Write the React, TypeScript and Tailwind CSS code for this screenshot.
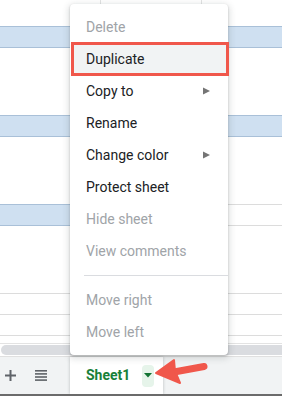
import { ReactNode } from 'react';

const FONT = { fontFamily: 'Roboto, "Liberation Sans", sans-serif' };

type Item = { label: string; disabled?: boolean; sub?: boolean; marked?: boolean };

const GROUP_ONE: Item[] = [
  { label: 'Delete', disabled: true },
  { label: 'Duplicate', marked: true },
  { label: 'Copy to', sub: true },
  { label: 'Rename' },
  { label: 'Change color', sub: true },
  { label: 'Protect sheet' },
  { label: 'Hide sheet', disabled: true },
  { label: 'View comments', disabled: true },
];

const GROUP_TWO: Item[] = [
  { label: 'Move right', disabled: true },
  { label: 'Move left', disabled: true },
];

function SubArrow() {
  return (
    <svg width="8" height="8" viewBox="0 0 8 8" className="mr-[17px]">
      <polygon points="0,0.5 7,4 0,7.5" fill="#757575" />
    </svg>
  );
}

function MenuRow({ item }: { item: Item }) {
  return (
    <div className="relative flex h-8 items-center justify-between pl-4">
      {item.marked && (
        <div className="absolute -top-px -bottom-px left-px -right-px border-[3px] border-[#f0574b] bg-[#f1f3f4]" />
      )}
      <span
        className={`relative text-[14px] ${item.disabled ? 'text-[#a0a4a8]' : 'text-[#202124]'}`}
      >
        {item.label}
      </span>
      {item.sub && <SubArrow />}
    </div>
  );
}

function BlueBand({ children }: { children?: ReactNode }) {
  return children ? (
    <div className="flex h-[22px]">{children}</div>
  ) : (
    <div className="h-[22px] border-y border-[#a9c0d8] bg-[#cfe0f1]" />
  );
}

export default function App() {
  return (
    <div className="relative h-[396px] w-[282px] overflow-hidden bg-white" style={FONT}>
      <div className="flex h-full flex-col">
        {/* grid */}
        <div className="flex h-[26px]">
          <div className="w-[100px]" />
          <div className="w-[101px] border-l border-[#e2e3e3]" />
          <div className="flex-1 border-l border-[#e2e3e3]" />
        </div>
        <BlueBand />
        <div className="h-[67px]" />
        <BlueBand />
        <div className="h-[67px]" />
        <BlueBand>
          <div className="w-[70px] border-y border-[#a9c0d8] bg-[#cfe0f1]" />
          <div className="flex-1 border-y border-[#dcdcdc]" />
        </BlueBand>
        <div className="h-[67px]" />
        <div className="h-[21px] border-t border-[#dcdcdc]" />
        <div className="h-[21px] border-t border-[#dcdcdc]" />
        <div className="h-[8px] border-t border-[#dcdcdc]" />
        <div className="h-px bg-[#e3e3e3]" />
        {/* scrollbar */}
        <div className="h-[12px] py-px pl-px">
          <div className="h-[10px] rounded-l-full bg-[#dadce0]" />
        </div>
        {/* sheet bar */}
        <div className="flex h-[38px] bg-[#f1f3f4] border-t border-[#e0e0e0]">
          <div className="flex w-[70px] items-center">
            <svg width="11" height="11" viewBox="0 0 11 11" className="ml-[5px]">
              <rect x="4.5" y="0" width="2" height="11" fill="#5f6368" />
              <rect x="0" y="4.5" width="11" height="2" fill="#5f6368" />
            </svg>
            <svg width="12" height="11" viewBox="0 0 12 11" className="ml-[19px]">
              <rect x="0" y="0" width="12" height="1.6" fill="#5f6368" />
              <rect x="0" y="3.1" width="12" height="1.6" fill="#5f6368" />
              <rect x="0" y="6.2" width="12" height="1.6" fill="#5f6368" />
              <rect x="0" y="9.3" width="12" height="1.6" fill="#5f6368" />
            </svg>
          </div>
          <div className="flex w-[93px] items-center bg-white pl-4 shadow-[0_0_3px_rgba(60,64,67,0.3)]">
            <span className="text-[14px] font-bold text-[#188038]">Sheet1</span>
            <div className="ml-[12px] flex h-[22px] w-[12px] items-center justify-center rounded-sm bg-[#e6f4ea]">
              <svg width="8" height="5" viewBox="0 0 8 5">
                <polygon points="0,0 8,0 4,4.5" fill="#137333" />
              </svg>
            </div>
          </div>
          <div className="flex-1" />
        </div>
        <div className="h-[2px] bg-[#6b6b6b]" />
      </div>

      {/* context menu */}
      <div className="absolute left-[70px] top-[4px] w-[158px] rounded bg-white pt-[7px] pb-[7px] shadow-[0_1px_2px_rgba(60,64,67,0.3),0_2px_6px_2px_rgba(60,64,67,0.15)]">
        {GROUP_ONE.map((item) => (
          <MenuRow key={item.label} item={item} />
        ))}
        <div className="py-2 pl-[14px]">
          <div className="h-px bg-[#dadce0]" />
        </div>
        {GROUP_TWO.map((item) => (
          <MenuRow key={item.label} item={item} />
        ))}
      </div>

      {/* annotation arrow */}
      <svg
        className="absolute left-[154px] top-[356px]"
        width="58"
        height="32"
        viewBox="0 0 58 32"
      >
        <line x1="20" y1="16" x2="50" y2="10.5" stroke="#f0574b" strokeWidth="7" strokeLinecap="round" />
        <polygon
          points="2,17 20,4 21,15 26,27"
          fill="#f0574b"
          stroke="#f0574b"
          strokeWidth="2"
          strokeLinejoin="round"
        />
      </svg>
    </div>
  );
}
